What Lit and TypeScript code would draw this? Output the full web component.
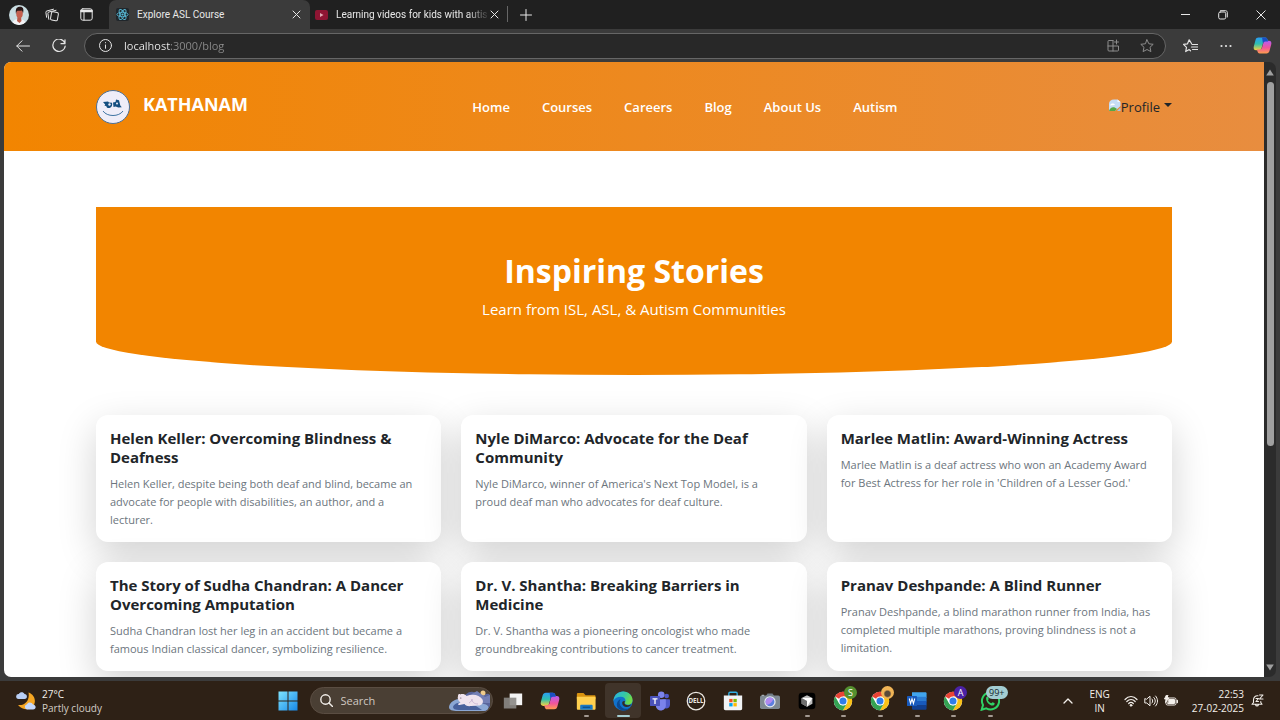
import { LitElement, html, svg, css } from "lit";
import { customElement } from "lit/decorators.js";
import { classMap } from "lit/directives/class-map.js";

const chrome = svg`
  <circle cx="12" cy="12" r="11" fill="#fff"/>
  <path d="M12 12 2.500 6.500A11 11 0 0 1 21.500 6.500H12z" fill="#e94335"/>
  <path d="M21.500 6.500A11 11 0 0 1 12 23l4.800-8.200L17 9 12 6.500z" fill="#fbc116"/>
  <path d="M2.500 6.500A11 11 0 0 0 12 23l4.800-8.200-4.800 2.600-4.700-2.700z" fill="#34a353"/>
  <circle cx="12" cy="12" r="5.400" fill="#fff"/><circle cx="12" cy="12" r="4.200" fill="#2f7de9"/>`;

const copilot = (id: string) => svg`
  <defs>
    <linearGradient id="${id}a" x1="0" y1="0" x2="0" y2="1"><stop offset="0" stop-color="#2a9df5"/><stop offset=".5" stop-color="#2fbfae"/><stop offset="1" stop-color="#ffd23c"/></linearGradient>
    <linearGradient id="${id}b" x1="0" y1="0" x2="0" y2="1"><stop offset="0" stop-color="#b65cf2"/><stop offset=".55" stop-color="#f0559b"/><stop offset="1" stop-color="#ff9d4d"/></linearGradient>
  </defs>
  <path d="M7 2h8.500c1.600 0 2.300 1 2.800 2.500L19 7h-3.500c-1.800 0-2.600 1-3 2.600l-1.700 6c-.5 1.700-1.300 2.400-3 2.400H4c-2.700 0-3.700-2-3-4.700L3.200 5C3.800 3 5 2 7 2z" fill="url(#${id}a)"/>
  <path d="M17 22H8.500c-1.600 0-2.300-1-2.800-2.500L5 17h3.500c1.800 0 2.600-1 3-2.600l1.700-6c.5-1.700 1.300-2.400 3-2.400H20c2.700 0 3.700 2 3 4.700L20.800 19c-.6 2-1.800 3-3.800 3z" fill="url(#${id}b)"/>
  <path d="M11.500 2h4c1.600 0 2.300 1 2.800 2.500L19 7h-3.500c-1.800 0-2.600 1-3 2.600z" fill="#1b4fc4"/>`;

const glyphs: Record<string, unknown> = {
  taskview: svg`<rect x="8" y="3" width="15" height="14" fill="#f4f4f4"/><rect x="1" y="8" width="15" height="13" fill="#8b8885" opacity=".9"/>`,
  copilot: copilot("tc"),
  folder: svg`<path d="M1 4.500C1 3 1.500 2.500 3 2.500h6l2.500 2.500H22c1 0 1.500.5 1.500 1.500V10H1z" fill="#d9930f"/><path d="M1 7h21.500c.7 0 1 .4 1 1v13c0 1-.5 1.500-1.500 1.500H2.500C1.500 22.500 1 22 1 21z" fill="#ffd04f"/><path d="M5 22.500V18c0-1 .5-1.500 1.500-1.500h12c1 0 1.500.5 1.500 1.500v4.500z" fill="#1979c4"/><path d="M8 19.500h9" stroke="#0b4d86" stroke-width="1.500"/>`,
  edge: svg`<defs><linearGradient id="eg" x1="0" y1="0" x2="1" y2=".4"><stop offset="0" stop-color="#2bb1e8"/><stop offset=".6" stop-color="#35c9a4"/><stop offset="1" stop-color="#6fdc4a"/></linearGradient></defs>
    <circle cx="12" cy="12" r="11.500" fill="#1172cc"/>
    <path d="M.5 12C.8 5 6 .5 12.200.5 19 .5 23.500 5.500 23.500 11c0 3.500-2.500 5.500-5.500 5.500-2.500 0-4-1-4-2 0-.7 1-1 1-3 0-2.500-2.500-4.500-5.500-4.500C5.500 7 2 8.500.5 12z" fill="url(#eg)"/>
    <path d="M9 10c-1.800 3-1.500 7 1.500 9.500 3 2.500 7.500 2.500 10.500.3-2 2.500-5.500 4-9.500 3.700C6 22 3.500 18 5 14c.8-2 2.200-3.300 4-4z" fill="#0b4a94"/>
    <path d="M14 12c.6 1-.4 1.700-.3 2.700.3 1.500 2.200 2.300 4.300 2.300 2 0 3.500-.6 4.300-1.300-.6 1.600-2.800 3.600-5.800 3.600-3.300 0-5.500-2.600-5.500-5 0-1.300 1.200-2.600 3-2.300z" fill="#332b23"/>`,
  teams: svg`<circle cx="20" cy="6" r="2.800" fill="#5059c9"/><circle cx="13.500" cy="4.500" r="4" fill="#7b83eb"/><path d="M15 10h8c.6 0 1 .4 1 1v5.500c0 2.500-2 4.500-4.500 4.500S15 19 15 16.500z" fill="#5059c9"/><path d="M7 10h12v7.500c0 3.300-2.700 6-6 6s-6-2.700-6-6z" fill="#7b83eb"/><rect y="6" width="12" height="12" rx="1" fill="#4b53bc"/><path d="M3 9.500h6M6 9.500v6" stroke="#fff" stroke-width="1.600"/>`,
  dell: svg`<circle cx="12" cy="12" r="10.500" fill="none" stroke="#ece8e2" stroke-width="1.500"/><text x="12" y="14.800" text-anchor="middle" font-size="7.500" font-weight="700" font-family="Open Sans, sans-serif" fill="#ece8e2">DELL</text>`,
  store: svg`<path d="M7 6V3c0-1 .5-1.500 1.500-1.500h7C16.500 1.500 17 2 17 3v3" fill="none" stroke="#32b1e6" stroke-width="1.600"/><path d="M1 5.500h22V21c0 1.300-.7 2-2 2H3c-1.300 0-2-.7-2-2z" fill="#f1f3f5"/><path d="M7.500 9.500h4v4h-4z" fill="#f25022"/><path d="M12.500 9.500h4v4h-4z" fill="#7fba00"/><path d="M7.500 14.500h4v4h-4z" fill="#00a4ef"/><path d="M12.500 14.500h4v4h-4z" fill="#ffb900"/>`,
  camera: svg`<path d="M7 6l2-3h6l2 3z" fill="#6f7a83"/><rect y="5.500" width="24" height="16" rx="2" fill="#7f8a93"/><path d="M2 4.500h3v1.500H2z" fill="#a5adb3"/><circle cx="12" cy="13" r="6.800" fill="#e4e9ef"/><circle cx="12" cy="13" r="5.300" fill="#5d7fe0"/><path d="M8 16.500a5.300 5.300 0 0 1 8-7c-1 3.500-4 6.500-8 7z" fill="#b18af0"/>`,
  cursor: svg`<rect x="2" y="2" width="20" height="20" rx="4" fill="#000"/><path d="M12 5l6.500 3.400v7L12 19l-6.500-3.600v-7z" fill="#bdbdbd"/><path d="M5.500 8.400h13L12 19v-7z" fill="#fff"/><path d="M5.500 8.400L12 12v7l-6.500-3.600z" fill="#6e6e6e"/>`,
  chrome,
  word: svg`<path d="M6 1.500h16c.8 0 1.500.6 1.500 1.500v5H6z" fill="#41a5ee"/><path d="M6 7h17.500v5.500H6z" fill="#2b7cd3"/><path d="M6 12h17.500v5.500H6z" fill="#185abd"/><path d="M6 17h17.500v4c0 .9-.7 1.500-1.500 1.500H7.500C6.700 22.500 6 22 6 21z" fill="#103f91"/><rect y="6" width="12" height="12" rx="1" fill="#185abd"/><path d="M2.700 9l1.600 6L6 9.500 7.700 15l1.600-6" fill="none" stroke="#fff" stroke-width="1.300"/>`,
  whatsapp: svg`<path d="M2 22.500l1.600-5.700A10.300 10.300 0 1 1 7.500 20.800z" fill="none" stroke="#2fd366" stroke-width="2.400"/><path d="M7.500 7.500c1-1.200 1.800-1 2.300.3l.7 1.700c0 .6-.8 1-1 1.500 1 2 2.300 3 4 3.700.6-.2 1-1.200 1.700-1.200l2 1c.8.500.3 2-.7 2.600-3.500 2-10.500-4-9-9.600z" fill="#2fd366"/>`,
};

interface Pin { name: string; label: string; badge?: string; tone?: string; state?: string }
const pins: Pin[] = [
  { name: "taskview", label: "Task view" },
  { name: "copilot", label: "Copilot" },
  { name: "folder", label: "File Explorer", state: "open" },
  { name: "edge", label: "Microsoft Edge", state: "active" },
  { name: "teams", label: "Teams" },
  { name: "dell", label: "Dell" },
  { name: "store", label: "Microsoft Store" },
  { name: "camera", label: "Camera" },
  { name: "cursor", label: "Cursor", state: "open" },
  { name: "chrome", label: "Chrome profile S", badge: "S", tone: "green", state: "open" },
  { name: "chrome", label: "Chrome profile", badge: "", tone: "photo", state: "open" },
  { name: "word", label: "Word", state: "open" },
  { name: "chrome", label: "Chrome profile A", badge: "A", tone: "violet", state: "open" },
  { name: "whatsapp", label: "WhatsApp", badge: "99+", tone: "count", state: "open" },
];

const stories = [
  ["Helen Keller: Overcoming Blindness & Deafness", "Helen Keller, despite being both deaf and blind, became an advocate for people with disabilities, an author, and a lecturer."],
  ["Nyle DiMarco: Advocate for the Deaf Community", "Nyle DiMarco, winner of America's Next Top Model, is a proud deaf man who advocates for deaf culture."],
  ["Marlee Matlin: Award-Winning Actress", "Marlee Matlin is a deaf actress who won an Academy Award for Best Actress for her role in 'Children of a Lesser God.'"],
  ["The Story of Sudha Chandran: A Dancer Overcoming Amputation", "Sudha Chandran lost her leg in an accident but became a famous Indian classical dancer, symbolizing resilience."],
  ["Dr. V. Shantha: Breaking Barriers in Medicine", "Dr. V. Shantha was a pioneering oncologist who made groundbreaking contributions to cancer treatment."],
  ["Pranav Deshpande: A Blind Runner", "Pranav Deshpande, a blind marathon runner from India, has completed multiple marathons, proving blindness is not a limitation."],
];

const base = css`
  *, *::before, *::after { box-sizing: border-box; }
  button { border: 0; padding: 0; margin: 0; background: none; color: inherit; font: inherit; display: flex; align-items: center; justify-content: center; flex: none; }
  svg { display: block; flex: none; }
  .line { fill: none; stroke: currentColor; stroke-width: 1; stroke-linecap: round; stroke-linejoin: round; }
`;

@customElement("browser-tabs")
class BrowserTabs extends LitElement {
  static styles = [base, css`
    :host { display: flex; height: 29px; background: #202020; color: #e8e8e8; font-family: Roboto, "Open Sans", sans-serif; font-size: 10px; }
    .tool { width: 34px; }
    .me { width: 35px; padding-left: 3px; }
    .tab { display: flex; align-items: center; }
    .tab.active { width: 201px; margin-left: 6px; padding: 0 9px 0 7px; background: #3b3b3b; border-radius: 7px 7px 0 0; }
    .tab.other { width: 194px; padding: 0 5px; }
    .name { flex: 1; margin-left: 8px; line-height: 16px; white-space: nowrap; }
    .other .name { mask-image: linear-gradient(90deg, #000 85%, transparent); }
    .sep { width: 1px; height: 16px; margin: 6px 3px 0; background: #666; }
    .add { width: 30px; }
    .space { flex: 1; }
    .win { width: 38px; }
  `];
  render() {
    const x = html`<svg class="line" width="9" height="9" viewBox="0 0 9 9"><path d="M1 1l7 7M8 1L1 8"/></svg>`;
    return html`
      <button class="me" aria-label="Profile"><svg width="20" height="20" viewBox="0 0 20 20">
        <defs><clipPath id="c"><circle cx="10" cy="10" r="10"/></clipPath></defs>
        <g clip-path="url(#c)"><rect width="20" height="20" fill="#c9dde2"/><path d="M3 20c0-4 3-6 7-6s7 2 7 6z" fill="#f4f4f6"/><path d="M8.500 12h3.500l.5 4-2 2-2.500-2z" fill="#b85b4a"/><ellipse cx="10.500" cy="8.500" rx="3.300" ry="4.500" fill="#c4604f"/><path d="M7 9C6 3 8.500 1.800 11 1.800c3.300 0 4 2.700 3 6.700-.3-2-.8-2.600-1.500-3-1.600.3-3 .2-4 .2C7.500 6 7.300 7.500 7 9z" fill="#281717"/></g></svg></button>
      <button class="tool" aria-label="Workspaces"><svg class="line" width="15" height="14" viewBox="0 0 15 14"><rect x="6" y="4" width="7" height="8.500" rx="1.500" transform="rotate(10 9.500 8)"/><path d="M3.800 11.300L2.900 5.500c-.1-.9.200-1.300 1-1.500L11 2.300M1.600 9.300L.9 4.500c-.1-.9.200-1.300 1-1.500L8.500 1.200"/></svg></button>
      <button class="tool" aria-label="Tab actions"><svg class="line" width="13" height="13" viewBox="0 0 13 13"><rect x=".8" y=".8" width="11.400" height="11.400" rx="2"/><path d="M1 2.500h11M1 3.500h11" stroke-width="1.500"/><path d="M4 4v8"/></svg></button>
      <div class="tab active">
        <svg width="13" height="13" viewBox="0 0 13 13"><rect width="13" height="13" rx="2" fill="#20262b"/><g fill="none" stroke="#58b9d6" stroke-width=".9"><ellipse cx="6.500" cy="6.500" rx="5.600" ry="2.200"/><ellipse cx="6.500" cy="6.500" rx="5.600" ry="2.200" transform="rotate(60 6.500 6.500)"/><ellipse cx="6.500" cy="6.500" rx="5.600" ry="2.200" transform="rotate(120 6.500 6.500)"/></g><circle cx="6.500" cy="6.500" r="1.100" fill="#58b9d6"/></svg>
        <span class="name">Explore ASL Course</span><button aria-label="Close tab">${x}</button>
      </div>
      <div class="tab other">
        <svg width="13" height="10" viewBox="0 0 13 10"><rect width="13" height="10" rx="2" fill="#8e1533"/><path d="M5 3v4l3.500-2z" fill="#e0a9b4"/></svg>
        <span class="name">Learning videos for kids with autis</span><button aria-label="Close tab">${x}</button>
      </div>
      <div class="sep"></div>
      <button class="add" aria-label="New tab"><svg class="line" width="12" height="12" viewBox="0 0 12 12"><path d="M6 .5v11M.5 6h11"/></svg></button>
      <div class="space"></div>
      <button class="win" aria-label="Minimize"><svg class="line" width="9" height="9" viewBox="0 0 9 9"><path d="M0 4.500h9"/></svg></button>
      <button class="win" aria-label="Restore"><svg class="line" width="10" height="10" viewBox="0 0 10 10"><rect x=".7" y="2" width="7" height="7" rx="1.500"/><path d="M2.500.7H7.500C8.700.7 9.300 1.500 9.300 2.500V7"/></svg></button>
      <button class="win" aria-label="Close"><svg class="line" width="10" height="10" viewBox="0 0 10 10"><path d="M.8.8l8.400 8.400M9.200.8L.8 9.200"/></svg></button>`;
  }
}

@customElement("browser-toolbar")
class BrowserToolbar extends LitElement {
  static styles = [base, css`
    :host { display: flex; align-items: center; height: 33px; padding-left: 5px; background: #3b3b3b; color: #e4e4e4; }
    .nav { width: 36px; height: 33px; }
    .address { flex: 1; display: flex; align-items: center; height: 26px; margin: 0 6px 0 7px; padding: 0 2px 0 14px; border: 1px solid #666; border-radius: 13px; background: #282828; }
    .url { flex: 1; min-width: 0; margin-left: 12px; padding: 0; border: 0; outline: 0; font: inherit; font-size: 11px; line-height: 18px; color: transparent; background: linear-gradient(90deg, #f2f2f2 46px, #8c8c8c 46px); background-clip: text; -webkit-background-clip: text; }
    .dim { width: 33px; color: #8c8c8c; }
  `];
  render() {
    return html`
      <button class="nav" aria-label="Back"><svg class="line" width="14" height="12" viewBox="0 0 14 12"><path d="M13.500 6H.8M6 .8L.8 6 6 11.200"/></svg></button>
      <button class="nav" aria-label="Reload"><svg class="line" width="14" height="14" viewBox="0 0 14 14"><path d="M13 4.500A6.200 6.200 0 1 0 13.200 7M13 .8v3.900H9" stroke-width="1.200"/></svg></button>
      <div class="address">
        <svg class="line" width="13" height="13" viewBox="0 0 13 13"><circle cx="6.500" cy="6.500" r="6"/><path d="M6.500 6v3.300M6.500 3.600v.2"/></svg>
        <input class="url" aria-label="Address" value="localhost:3000/blog">
        <button class="dim" aria-label="Install app"><svg class="line" width="13" height="13" viewBox="0 0 13 13"><path d="M6 1.500H2c-.7 0-1 .3-1 1V11c0 .7.3 1 1 1h8.500c.7 0 1-.3 1-1V7H1M6 1.500V12M9.500 1v4M7.500 3h4"/></svg></button>
        <button class="dim" aria-label="Favorite this page"><svg class="line" width="14" height="14" viewBox="0 0 14 14"><path d="M7 .8l1.900 4 4.300.5-3.200 3 .9 4.300L7 10.500l-3.900 2.100.9-4.300-3.200-3 4.300-.5z"/></svg></button>
      </div>
      <button class="nav" aria-label="Favorites"><svg class="line" width="15" height="14" viewBox="0 0 15 14"><path d="M8.500 4.500L6.200.8 4.500 4.800l-4 .5 3 3-.8 4.300 3.500-2M7.500 11.800L6.200 10.600M9 5.500h5.500M8.500 8h6M9.500 10.500h5" stroke-width="1.200"/></svg></button>
      <button class="nav" aria-label="Settings"><svg width="12" height="4" viewBox="0 0 12 4" fill="#e4e4e4"><circle cx="1.500" cy="2" r="1.100"/><circle cx="6" cy="2" r="1.100"/><circle cx="10.500" cy="2" r="1.100"/></svg></button>
      <button class="nav" aria-label="Copilot"><svg width="19" height="19" viewBox="0 0 24 24">${copilot("bc")}</svg></button>`;
  }
}

@customElement("site-header")
class SiteHeader extends LitElement {
  static styles = [base, css`
    :host { display: flex; align-items: center; justify-content: space-between; height: 89px; padding: 0 92px; background: linear-gradient(90deg, #f28500, #e88d3f); color: #fff; }
    .brand { display: flex; gap: 13px; padding-right: 14px; color: inherit; text-decoration: none; }
    .word { font-size: 18px; line-height: 28px; font-weight: 700; }
    nav { display: flex; gap: 32px; }
    .link { color: inherit; text-decoration: none; font-size: 13px; line-height: 20px; font-weight: 600; }
    .user { align-items: flex-start; color: #212529; font-size: 13px; line-height: 20px; }
    .pic { margin-top: 2px; }
    .caret { margin: 6px 0 0 4px; }
  `];
  render() {
    return html`
      <a class="brand" href="#"><svg width="34" height="34" viewBox="0 0 34 34"><circle cx="17" cy="17" r="16.500" fill="#efedf8" stroke="#4d6f93"/><path d="M7 12l5-.5 1 1 3 .2c.7 2-.2 4.800-2.500 5.300-2 .3-3-.5-3.300-2l-1.700-.2.700-1.200z" fill="#154f80"/><path d="M17 12.500l2.500-.5.5-2.500 3 .7 1.300 5.300 1.500 1.800-3.500.2-2.600-1-2.200.5z" fill="#154f80"/><circle cx="13.500" cy="14.500" r="1.200" fill="#efedf8"/><circle cx="21" cy="13.500" r="1" fill="#efedf8"/><path d="M7 21c4 6 16 6 20 0" fill="none" stroke="#3f74a3"/></svg><span class="word">KATHANAM</span></a>
      <nav>${["Home", "Courses", "Careers", "Blog", "About Us", "Autism"].map((t) => html`<a class="link" href="#">${t}</a>`)}</nav>
      <button class="user"><svg class="pic" width="13" height="13" viewBox="0 0 13 13"><path d="M1 12V5c0-3 2-4.500 5-4.500h3.500L12.500 3v4L7 12z" fill="#c6dcf5"/><path d="M9.500.5V3h3z" fill="#f6f9fc"/><path d="M2 6.500C3 4 6 4 7 6z" fill="#fff"/><path d="M1 12c1-4 5-5 8-2l-2 2z" fill="#57a846"/><path d="M9 12l3.500-3.500V12z" fill="#a8c4e2"/></svg><span>Profile</span><svg class="caret" width="8" height="4" viewBox="0 0 8 4"><path d="M0 0h8L4 4z" fill="#212529"/></svg></button>`;
  }
}

@customElement("stories-page")
class StoriesPage extends LitElement {
  static styles = [base, css`
    :host { display: block; background: #fff; }
    .content { padding: 56px 92px 40px; }
    .hero { padding: 43px 20px 55px; border-radius: 0 0 50% 50% / 0 0 20% 20%; background: #f28500; color: #fff; text-align: center; }
    h1 { margin: 0 0 6px; font-size: 32px; line-height: 42px; font-weight: 700; }
    .sub { margin: 0; font-size: 15px; line-height: 22px; }
    .grid { display: grid; grid-template-columns: repeat(3, 1fr); gap: 20px; margin-top: 40px; }
    .card { padding: 14px 14px 13px; border-radius: 12px; background: #fff; box-shadow: 0 13px 38px rgba(0, 0, 0, .18); }
    h2 { margin: 0 0 8px; color: #212529; font-size: 15px; line-height: 19px; font-weight: 700; }
    .text { margin: 0; padding-right: 4px; color: #6c757d; font-size: 11px; line-height: 18px; }
  `];
  render() {
    return html`
      <site-header></site-header>
      <main class="content">
        <section class="hero"><h1>Inspiring Stories</h1><p class="sub">Learn from ISL, ASL, &amp; Autism Communities</p></section>
        <section class="grid">${stories.map(([title, text]) => html`<article class="card"><h2>${title}</h2><p class="text">${text}</p></article>`)}</section>
      </main>`;
  }
}

@customElement("task-bar")
class TaskBar extends LitElement {
  static styles = [base, css`
    :host { display: grid; grid-template-columns: 1fr auto 1fr; align-items: center; height: 39px; background: #2e2116; color: #f3efea; font-size: 10px; line-height: 14px; }
    .weather { justify-self: start; margin-left: 16px; gap: 6px; text-align: left; }
    .sky { color: #d3ccc5; }
    .middle { display: flex; align-items: center; height: 39px; padding-right: 2px; }
    .start { width: 37px; }
    .search { display: flex; align-items: center; width: 183px; height: 27px; margin: 0 2px 0 3px; padding-left: 9px; border: 1px solid #5a4d42; border-radius: 14px; background: #4a3f34; overflow: hidden; }
    .field { flex: 1; min-width: 0; margin-left: 8px; padding: 0; border: 0; outline: 0; background: none; color: #fff; font: inherit; font-size: 11px; }
    .field::placeholder { color: #cfc8c1; opacity: 1; }
    .pins { display: grid; grid-template-columns: repeat(14, 1fr); width: 514px; }
    .pin { position: relative; height: 35px; border-radius: 4px; }
    .active { background: #40342a; }
    .open::after, .active::after { content: ""; position: absolute; bottom: 1px; left: 50%; width: 5px; height: 2px; margin-left: -2px; border-radius: 1px; background: #a49a92; }
    .active::after { width: 13px; margin-left: -6px; background: #a5cfd3; }
    .badge { position: absolute; top: 3px; left: 19px; min-width: 13px; height: 13px; border-radius: 7px; font-size: 9px; line-height: 13px; text-align: center; color: #fff; }
    .green { background: #55902f; }
    .violet { background: #4b22a5; }
    .photo { background: radial-gradient(circle at 50% 60%, #5a4a3a 0 25%, #f0b456 40%); }
    .count { width: 22px; left: 14px; background: #a3cdd2; color: #16282b; }
    .tray { justify-self: end; display: flex; align-items: center; margin-right: 16px; }
    .lang { margin: 0 14px 0 16px; text-align: center; }
    .status { gap: 6px; margin-right: 14px; }
    .clock { display: block; margin-right: 7px; text-align: right; }
    .row { display: block; }
  `];
  render() {
    return html`
      <button class="weather"><svg width="20" height="20" viewBox="0 0 20 20"><path d="M12.500 1.500c6 2 8 8.500 5 13-3 4.500-10 5.500-15.500-.5 7 1 12-5 10.500-12.500z" fill="#f5a623"/><path d="M2.500 8a2.500 2.500 0 0 1 .3-5C4 .5 7.500.5 8.500 3c3 0 3.500 5 0 5z" fill="#b9cff5"/><path d="M11 18.500a2.700 2.700 0 0 1 0-5.300c1-2.400 5-2.400 6 .3 3.500.3 3.500 5 0 5z" fill="#c5d8fb"/></svg><span><span class="row">27°C</span><span class="row sky">Partly cloudy</span></span></button>
      <div class="middle">
        <button class="start" aria-label="Start"><svg width="20" height="20" viewBox="0 0 20 20"><defs><linearGradient id="w" x1="0" y1="0" x2="1" y2="1"><stop offset="0" stop-color="#7fe4ff"/><stop offset="1" stop-color="#1687e8"/></linearGradient></defs><path d="M.5.5h9v9h-9zM10.500.5h9v9h-9zM.5 10.500h9v9h-9zM10.500 10.500h9v9h-9z" fill="url(#w)"/></svg></button>
        <label class="search"><svg class="line" width="13" height="13" viewBox="0 0 13 13"><circle cx="5.500" cy="5.500" r="4.700" stroke-width="1.400"/><path d="M9 9l3.500 3.500" stroke-width="1.400"/></svg><input class="field" placeholder="Search" aria-label="Search">
          <svg width="44" height="23" viewBox="0 0 44 23"><path d="M13 14C17 1 25 1 30 5s9-3 12 1v11l-4 5H16z" fill="#59659c"/><circle cx="35" cy="4" r="2.500" fill="#efcb8c"/><path d="M22 6l7-4 8 6 5-2v8H24z" fill="#737fb5"/><path d="M1 18c1-6 8-9 15-8l20 5c6 1 6 6 0 7H10c-6 0-9-1-9-4z" fill="#8ba7d4"/><path d="M5 18c1-4 6-5 11-4l12 3 6 4H11c-4 0-6-1-6-3z" fill="#48619c"/><path d="M10 7c0-2 1.500-2.500 2.500-1.500C14 4.500 17 5 18.500 7c6-2.500 13-1.500 16 3.500 1.500 3.500-1 6.500-5 6l-6 .5c-4 .5-6.500-.5-7-2l-5 1c-2 0-2-1.500 1-2.500-2-1.500-3.500-4-2.500-6.500z" fill="#efe3ee"/><path d="M21 14c2-1 3-3 3-4 0 3 2 5 6 5" fill="none" stroke="#cbb8d4"/><circle cx="12.800" cy="9" r=".6" fill="#54445c"/></svg>
        </label>
        <div class="pins">${pins.map((p) => html`<button class=${classMap({ pin: true, open: p.state === "open", active: p.state === "active" })} aria-label=${p.label}>
          <svg width="20" height="20" viewBox="0 0 24 24">${glyphs[p.name]}</svg>
          ${p.tone ? html`<span class="badge ${p.tone}">${p.badge}</span>` : ""}</button>`)}</div>
      </div>
      <div class="tray">
        <button aria-label="Show hidden icons"><svg class="line" width="10" height="6" viewBox="0 0 10 6"><path d="M1 5l4-4 4 4" stroke-width="1.300"/></svg></button>
        <button class="lang"><span><span class="row">ENG</span><span class="row">IN</span></span></button>
        <button class="status" aria-label="Network, volume and battery">
          <svg class="line" width="14" height="12" viewBox="0 0 14 12"><path d="M1 4.500c3.500-4 8.500-4 12 0M2.800 6.500c2.500-2.700 6-2.700 8.400 0M4.700 8.500c1.500-1.600 3.200-1.600 4.600 0" stroke-width="1.200"/><circle cx="7" cy="10.300" r=".9" fill="currentColor"/></svg>
          <svg class="line" width="14" height="12" viewBox="0 0 14 12"><path d="M.8 4v4h2L6 10.800V1.200L2.800 4zM8 4c1 1 1 3 0 4M9.800 2.500c2 2 2 5 0 7M11.600 1c2.600 3 2.600 7 0 10"/></svg>
          <svg class="line" width="14" height="12" viewBox="0 0 14 12"><rect x="2" y="3" width="10" height="7" rx="1.500"/><path d="M5 4.500h5.500v4H4z" fill="currentColor"/><path d="M13.300 5.500v2" stroke-width="1.400"/><path d="M2.500 0L.5 4h2L1.500 7.500 5 3H3l1-3z" fill="currentColor"/></svg>
        </button>
        <button class="clock"><span class="row">22:53</span><span class="row">27-02-2025</span></button>
        <button aria-label="Notifications"><svg class="line" width="13" height="13" viewBox="0 0 13 13"><path d="M7 1.800C4 1.500 2.500 3.500 2.500 6v2.500L1 10.300h10L9.800 8.500V7.500M4.500 10.500c.5 2 2.500 2 3 0M8.500 1h3.500L8.500 5h3.500M5 4.500h2.500L5 7.500h2.500" stroke-width="1.100"/></svg></button>
      </div>`;
  }
}

@customElement("app-root")
class AppRoot extends LitElement {
  static styles = [base, css`
    :host { display: flex; flex-direction: column; height: 100vh; overflow: hidden; background: #3b3b3b; font-family: "Segoe UI", "Open Sans", "Noto Sans", sans-serif; }
    browser-tabs, browser-toolbar, task-bar { flex: none; }
    .view { flex: 1; min-height: 0; display: flex; margin: 0 4px 4px; border-radius: 7px; overflow: hidden; }
    .page { flex: 1; overflow: hidden; }
    .scroll { display: flex; flex-direction: column; align-items: center; width: 12px; padding: 7px 0 6px; background: #2b2b2b; }
    .track { flex: 1; width: 7px; margin: 6px 0 5px; }
    .thumb { height: 63%; border-radius: 4px; background: #9f9f9f; }
  `];
  render() {
    return html`
      <browser-tabs></browser-tabs>
      <browser-toolbar></browser-toolbar>
      <div class="view">
        <stories-page class="page"></stories-page>
        <div class="scroll">
          <svg width="8" height="7" viewBox="0 0 8 7"><path d="M4 .5L7.800 6.500H.2z" fill="#9f9f9f"/></svg>
          <div class="track"><div class="thumb"></div></div>
          <svg width="8" height="7" viewBox="0 0 8 7"><path d="M4 6.500L7.800.5H.2z" fill="#9f9f9f"/></svg>
        </div>
      </div>
      <task-bar></task-bar>`;
  }
}
